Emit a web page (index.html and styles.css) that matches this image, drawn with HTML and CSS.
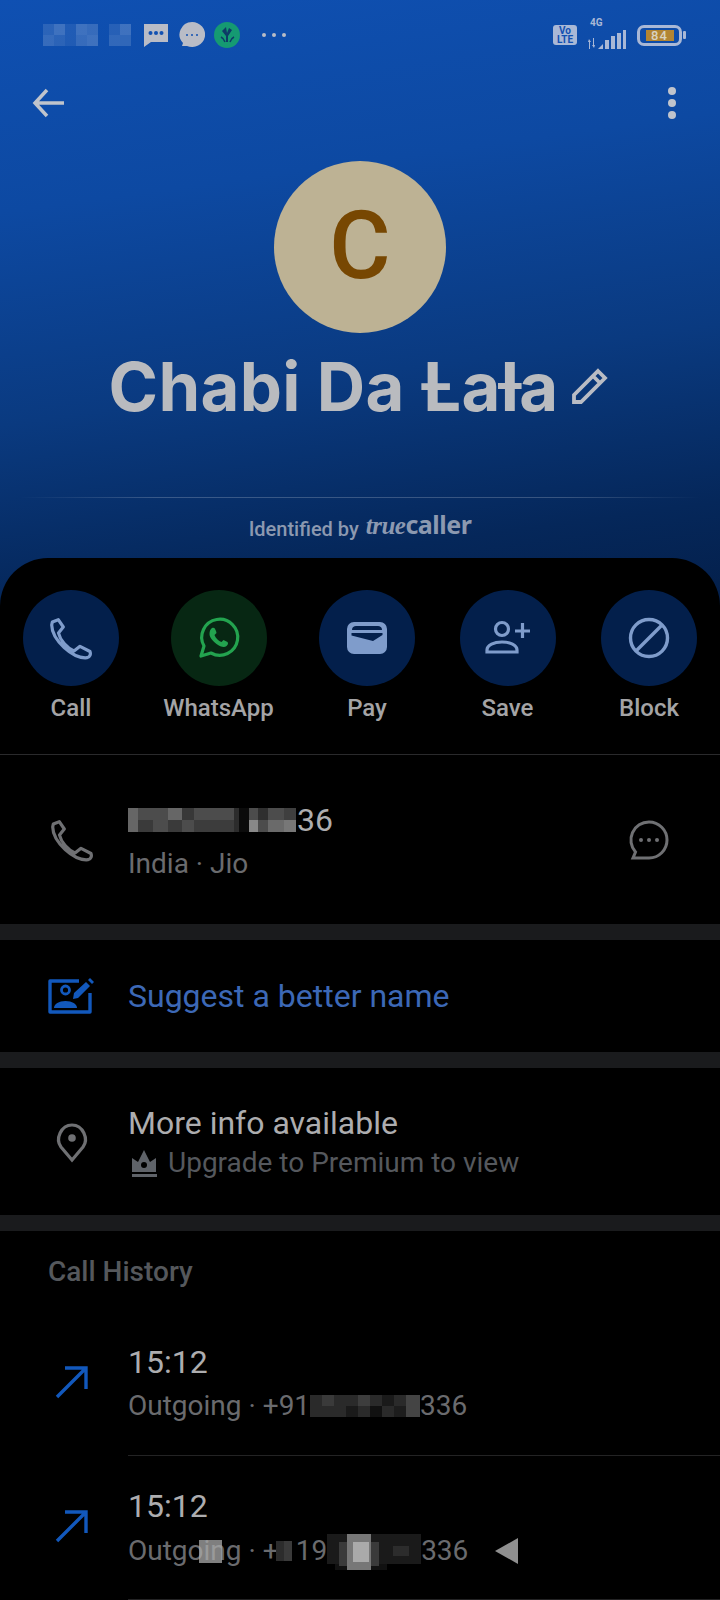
FILE: index.html
```html
<!DOCTYPE html>
<html lang="en">
<head>
<meta charset="utf-8">
<title>Chabi Da Lata</title>
<link rel="stylesheet" href="styles.css">
</head>
<body>
<div class="screen">
  <header class="hero">
    <div class="status">
      <div class="status-left">
        <svg class="mosaic-top" viewBox="0 0 90 22" width="90" height="22"><g fill="#fff">
          <rect width="11" height="11" opacity=".12"/><rect x="11" width="11" height="11" opacity=".2"/><rect x="22" width="11" height="11" opacity=".08"/><rect x="33" width="11" height="11" opacity=".2"/><rect x="44" width="11" height="11" opacity=".17"/>
          <rect y="11" width="11" height="11" opacity=".17"/><rect x="11" y="11" width="11" height="11" opacity=".12"/><rect x="22" y="11" width="11" height="11" opacity=".08"/><rect x="33" y="11" width="11" height="11" opacity=".17"/><rect x="44" y="11" width="11" height="11" opacity=".2"/>
          <rect x="66" width="11" height="11" opacity=".1"/><rect x="77" width="11" height="11" opacity=".2"/><rect x="66" y="11" width="11" height="11" opacity=".15"/><rect x="77" y="11" width="11" height="11" opacity=".14"/>
        </g></svg>
        <svg class="ic-msg" viewBox="0 0 24 24" width="24" height="24"><path fill="#b9bcc6" d="M0 1h24v18H7l-7 5z"/><g fill="#1150b2"><circle cx="6.500" cy="10" r="2"/><circle cx="12" cy="10" r="2"/><circle cx="17.500" cy="10" r="2"/></g></svg>
        <svg class="ic-bubble" viewBox="0 0 26 26" width="26" height="26"><path fill="#b9bcc6" d="M13 0a13 12.500 0 1 1-5 24H3l1-3A13 12.500 0 0 1 13 0z"/><g fill="#1150b2"><circle cx="8" cy="13" r="1"/><circle cx="13" cy="13" r="1"/><circle cx="18" cy="13" r="1"/></g></svg>
        <svg class="ic-saavn" viewBox="0 0 26 26" width="26" height="26"><circle cx="13" cy="13" r="13" fill="#159a72"/><path fill="#0d3a66" d="M12 5l1 6 2-5 3 2-4 6v6h-2v-6L8 9z"/><path stroke="#0d3a66" stroke-width="1.500" fill="none" d="M7 15c2 1 3 2 4 5M20 15c-2 1-3 2-4 5"/></svg>
        <svg class="ic-dots" viewBox="0 0 26 6" width="26" height="6"><g fill="#b9bcc6"><circle cx="3" cy="3" r="2"/><circle cx="13" cy="3" r="2"/><circle cx="23" cy="3" r="2"/></g></svg>
      </div>
      <div class="status-right">
        <div class="volte"><span>Vo</span><span>LTE</span></div>
        <div class="signal">
          <span class="net">4G</span>
          <svg viewBox="0 0 38 19" width="38" height="19"><g fill="#a9b8d6"><path d="M1 9l2 3H2v7H1v-7H0zM6 18l-2-3h1V8h1v7h1z"/><path d="M10 19l5-5v5z"/><rect x="17" y="10" width="4" height="9"/><rect x="23" y="6" width="4" height="13"/><rect x="29" y="3" width="4" height="16"/><rect x="35" y="0" width="3" height="19"/></g></svg>
        </div>
        <div class="battery"><span class="batt-fill">84</span></div>
        <span class="batt-cap"></span>
      </div>
    </div>
    <div class="toolbar">
      <svg class="back" viewBox="0 0 34 30" width="34" height="30"><path d="M32 15H3M15 2L3 15l12 13" fill="none" stroke="#c0c4cc" stroke-width="3.500"/></svg>
      <div class="kebab"><i></i><i></i><i></i></div>
    </div>
    <div class="avatar">C</div>
    <div class="name-row">
      <h1 class="name">Chabi Da Ƚaƚa</h1>
      <svg class="pencil" viewBox="0 0 38 38" width="38" height="38"><path d="M28 3l7 7L11 34H4v-7zM23 8l7 7" fill="none" stroke="#b9bcc4" stroke-width="3.800"/></svg>
    </div>
    <div class="hero-line"></div>
    <div class="identified"><span>Identified by</span><span class="logo"><em>true</em>caller</span></div>
  </header>

  <main class="sheet">
    <section class="actions">
      <div class="action"><div class="disc"><svg viewBox="0 0 44 44" width="44" height="44"><use href="#phone"/></svg></div><span>Call</span></div>
      <div class="action wide"><div class="disc green"><svg viewBox="0 0 44 44" width="44" height="44"><path d="M4 40l3-10a18 18 0 1 1 7 7z" fill="none" stroke="#23a34f" stroke-width="3.200" stroke-linejoin="round"/><path fill="#23a34f" d="M15 12c2-1 3 0 4 3l.5 2-2 2c1 3 4 6 7 7l2-2 4 2c1 1 .5 3-1 4-2 2-6 1-10-2s-7-7-7-10c0-3 1-5 2.500-6z"/></svg></div><span>WhatsApp</span></div>
      <div class="action pay"><div class="disc"><svg viewBox="0 0 44 44" width="44" height="44"><path fill="#7f9ccb" fill-rule="evenodd" d="M9 6h26a7 7 0 0 1 7 7v18a7 7 0 0 1-7 7H9a7 7 0 0 1-7-7V13a7 7 0 0 1 7-7zM7 14c0-3 2-4 4-4h22c2 0 4 1 4 4zM6.500 17H37.500v2L28 25 6.500 19.500z"/></svg></div><span>Pay</span></div>
      <div class="action"><div class="disc"><svg viewBox="0 0 48 44" width="48" height="44"><g fill="none" stroke="#7f9ccb" stroke-width="3.200"><circle cx="18" cy="13" r="6.500"/><path d="M3 36v-2c0-5 7-8 15-8s15 3 15 8v2zM31 15h15M38.500 7v15"/></g></svg></div><span>Save</span></div>
      <div class="action"><div class="disc"><svg viewBox="0 0 44 44" width="44" height="44"><g fill="none" stroke="#7f9ccb" stroke-width="3.400"><circle cx="22" cy="22" r="18.500"/><path d="M9 35L35 9"/></g></svg></div><span>Block</span></div>
    </section>

    <section class="row row-phone">
      <svg class="row-ic" viewBox="0 0 44 44" width="44" height="44"><use href="#phone"/></svg>
      <div class="row-text">
        <div class="title number"><svg viewBox="0 0 168 24" width="168" height="24" shape-rendering="crispEdges">
          <rect width="168" height="24" fill="#4c4c4c"/>
          <rect width="10" height="24" fill="#666"/><rect x="10" y="12" width="15" height="12" fill="#3a3a3a"/><rect x="40" width="14" height="12" fill="#666"/><rect x="40" y="12" width="14" height="12" fill="#3a3a3a"/><rect x="54" width="12" height="12" fill="#383838"/><rect x="66" y="12" width="40" height="12" fill="#3c3c3c"/><rect x="106" width="5" height="24" fill="#2c2c2c"/><rect x="111" width="10" height="24" fill="#0b0b0b"/><rect x="121" y="12" width="9" height="12" fill="#888"/><rect x="130" width="10" height="12" fill="#2f2f2f"/><rect x="140" y="12" width="16" height="12" fill="#6a6a6a"/><rect x="156" y="12" width="12" height="12" fill="#777"/><rect x="156" width="12" height="12" fill="#3f3f3f"/>
        </svg><span>36</span></div>
        <div class="sub">India · Jio</div>
      </div>
      <svg class="msg-ic" viewBox="0 0 42 42" width="42" height="42"><path d="M21 3a18 18 0 1 1 0 36H5l2.500-6A18 18 0 0 1 21 3z" fill="none" stroke="#6f7073" stroke-width="3"/><g fill="#6f7073"><circle cx="13" cy="21" r="2"/><circle cx="21" cy="21" r="2"/><circle cx="29" cy="21" r="2"/></g></svg>
    </section>
    <div class="band"></div>

    <section class="row row-suggest">
      <svg class="row-ic" viewBox="0 0 47 37" width="47" height="37"><path d="M42 15v19H2V3h29" fill="none" stroke="#1258bc" stroke-width="3.400" stroke-linejoin="round"/><g fill="#1258bc"><circle cx="17.500" cy="12" r="4" fill="none" stroke="#1258bc" stroke-width="2.800"/><path d="M6 30c0-4 5-7 11.500-7S29 26 29 30z"/><path d="M26 15L38 4l4 4-12 12-5 1zM40 2l2-2 4 4-2 2z"/></g></svg>
      <div class="suggest">Suggest a better name</div>
    </section>
    <div class="band"></div>

    <section class="row row-more">
      <svg class="row-ic" viewBox="0 0 44 44" width="44" height="44"><path d="M22 40L11 27c-6-8 0-22 11-22s17 14 11 22z" fill="none" stroke="#6f7073" stroke-width="3.200"/><circle cx="22" cy="18" r="3.800" fill="#6f7073"/></svg>
      <div class="row-text">
        <div class="title">More info available</div>
        <div class="sub premium"><svg viewBox="0 0 26 28" width="26" height="28"><path fill="#5f6369" d="M1 9l6 4 6-12 6 12 6-4v14H1z"/><rect x="1" y="25" width="25" height="3" fill="#5f6369"/><circle cx="13" cy="16" r="3" fill="#000"/></svg><span>Upgrade to Premium to view</span></div>
      </div>
    </section>
    <div class="band"></div>

    <h2 class="history">Call History</h2>

    <section class="call">
      <svg class="arrow" viewBox="0 0 34 34" width="34" height="34"><path d="M2 32L31 3M10 3h21v21" fill="none" stroke="#1258bc" stroke-width="3.400"/></svg>
      <div class="row-text call-text">
        <div class="title">15:12</div>
        <div class="sub outgoing"><span>Outgoing · +91</span><svg class="m1" viewBox="0 0 110 22" width="110" height="22" shape-rendering="crispEdges"><rect width="110" height="22" fill="#2a2a2a"/><rect x="12" width="12" height="11" fill="#3a3a3a"/><rect x="36" y="11" width="12" height="11" fill="#1a1a1a"/><rect x="48" width="12" height="11" fill="#3d3d3d"/><rect x="60" y="11" width="12" height="11" fill="#111"/><rect x="72" width="12" height="11" fill="#1a1a1a"/><rect x="84" y="11" width="12" height="11" fill="#1d1d1d"/><rect x="96" width="14" height="22" fill="#444"/></svg><span>336</span></div>
      </div>
    </section>
    <section class="call">
      <svg class="arrow" viewBox="0 0 34 34" width="34" height="34"><path d="M2 32L31 3M10 3h21v21" fill="none" stroke="#1258bc" stroke-width="3.400"/></svg>
      <div class="row-text call-text">
        <div class="title">15:12</div>
        <div class="sub outgoing second"><span>Outgoing · +</span><svg class="m2" viewBox="0 0 16 20" width="16" height="20" shape-rendering="crispEdges"><rect width="16" height="20" fill="#2c2c2c"/><rect x="8" width="8" height="20" fill="#3a3a3a"/></svg><span>19</span><svg class="m3" viewBox="0 0 94 36" width="94" height="36" shape-rendering="crispEdges"><rect width="94" height="30" fill="#1a1a1a"/><rect x="8" y="30" width="52" height="6" fill="#111"/><rect x="20" y="0" width="24" height="36" fill="#777"/><rect x="26" y="8" width="16" height="20" fill="#aaa"/><rect x="12" y="8" width="8" height="24" fill="#3a3a3a"/><rect x="44" y="8" width="8" height="24" fill="#3a3a3a"/><rect x="66" y="12" width="16" height="10" fill="#2c2c2c"/></svg><span>336</span></div>
      </div>
    </section>
  </main>

  <div class="home-btn"></div>
  <div class="back-btn"></div>
</div>

<svg class="defs" width="0" height="0" aria-hidden="true">
  <symbol id="phone" viewBox="0 0 44 44"><path fill="none" stroke="currentColor" stroke-width="3.200" stroke-linejoin="round" d="M3.300 6L9.300 3.700 14.300 11 9.500 17C11 24 18 32 25 35l6-4.700 10 5.200c1 2.500 0 5.500-3 6.200C24 43 3 24 2.700 9z"/></symbol>
</svg>
</body>
</html>
```

FILE: styles.css
```css
* { box-sizing: border-box; }
html, body { margin: 0; padding: 0; background: #000; }
body { font-family: Roboto, "Liberation Sans", sans-serif; }
.screen { position: relative; width: 720px; height: 1600px; overflow: hidden; background: #000; }
.defs { position: absolute; }

.hero { height: 608px; padding-top: 22px; background: linear-gradient(172deg, #0f50b2 0%, #0d49a2 30%, #0a3a80 60%, #05275a 85%, #041f4a 100%); display: flex; flex-direction: column; align-items: center; }
.status { width: 100%; height: 26px; padding: 0 43px; display: flex; justify-content: space-between; align-items: center; }
.status-left { display: flex; align-items: center; }
.ic-msg { margin-left: 11px; }
.ic-bubble { margin-left: 11px; }
.ic-saavn { margin-left: 9px; }
.ic-dots { margin-left: 21px; }
.status-right { display: flex; align-items: center; margin-right: -9px; }
.volte { width: 24px; height: 20px; border-radius: 3px; background: #a9b8d6; color: #1150b2; font: 700 10px/9px Roboto, sans-serif; display: flex; flex-direction: column; align-items: center; justify-content: center; }
.signal { position: relative; width: 38px; height: 28px; margin-left: 11px; display: flex; align-items: flex-end; }
.net { position: absolute; left: 2px; top: -4px; color: #a9b8d6; font: 700 10px/12px Roboto, sans-serif; }
.battery { width: 45px; height: 21px; margin-left: 11px; border: 3px solid #a9b8d6; border-radius: 7px; display: flex; align-items: center; justify-content: center; }
.batt-fill { width: 28px; height: 11px; background: #b28533; color: #d9d3c2; font: 500 13px/11px Roboto, sans-serif; letter-spacing: 1px; text-align: center; }
.batt-cap { width: 3px; height: 8px; margin-left: 1px; background: #a9b8d6; border-radius: 1px; }

.toolbar { width: 100%; padding: 0 44px 0 32px; margin-top: 40px; height: 30px; display: flex; justify-content: space-between; align-items: center; }
.kebab { display: flex; flex-direction: column; gap: 4px; }
.kebab i { display: block; width: 8px; height: 8px; border-radius: 50%; background: #c0c4cc; }

.avatar { width: 172px; height: 172px; margin-top: 43px; border-radius: 50%; background: #bdb294; color: #774702; font: 500 94px/170px Roboto, sans-serif; text-align: center; }
.name-row { display: flex; align-items: center; margin-top: 11px; margin-left: -3px; }
.name { margin: 0; color: #b9bbbf; font: 700 67px/86px Inter, "Noto Sans", sans-serif; letter-spacing: .3px; white-space: nowrap; }
.pencil { margin-left: 12px; }
.hero-line { width: 680px; height: 1px; margin-top: 67px; background: linear-gradient(90deg, rgba(255,255,255,0), rgba(255,255,255,.2) 20%, rgba(255,255,255,.2) 80%, rgba(255,255,255,0)); }
.identified { margin-top: 13px; display: flex; align-items: center; gap: 7px; color: #8c99b0; font: 500 20px/26px Roboto, sans-serif; }
.logo { margin-bottom: 8px; color: #8c99b0; font: 700 25px/26px "Noto Sans", sans-serif; letter-spacing: -.5px; }
.logo em { font-family: "Liberation Serif", serif; font-style: italic; }

.sheet { position: absolute; left: 0; top: 558px; width: 720px; height: 1042px; background: #000; border-radius: 48px 48px 0 0; }
.actions { height: 197px; padding: 32px 23px 0; display: flex; justify-content: space-between; border-bottom: 1px solid #2a2a2c; }
.action { width: 96px; display: flex; flex-direction: column; align-items: center; color: #a4a4a6; font: 500 24px/30px Roboto, sans-serif; white-space: nowrap; }
.action.wide { width: 108px; }
.action.pay { margin-left: 1px; margin-right: -1px; }
.disc { width: 96px; height: 96px; border-radius: 50%; background: #031f4b; color: #7f9ccb; margin-bottom: 7px; display: flex; align-items: center; justify-content: center; }
.disc.green { background: #072713; }

.row { display: flex; align-items: center; padding: 0 0 0 50px; }
.row-ic { width: 44px; flex: none; color: #6f7073; }
.row-text { margin-left: 34px; flex: 1; }
.row-phone { height: 169px; padding-right: 50px; }
.row-phone .row-text { padding-top: 3px; }
.row-phone .sub { margin-top: 6px; }
.msg-ic { flex: none; }
.band { height: 16px; background: #1a1b1d; }
.row-suggest { height: 112px; padding-left: 48px; }
.row-suggest .row-ic { width: 47px; }
.suggest { margin-left: 33px; color: #3c68b6; font: 400 32px/40px Roboto, sans-serif; }
.row-more { height: 147px; }
.title { color: #adadaf; font: 400 32px/40px Roboto, sans-serif; }
.sub { color: #6a6b6e; font: 400 28px/36px Roboto, sans-serif; margin-top: 5px; }
.number { display: flex; align-items: center; }
.number span { margin-left: 1px; }
.premium { display: flex; align-items: center; gap: 11px; margin-top: 2px; margin-left: 3px; color: #55585d; }
.history { margin: 0; padding: 23px 0 0 48px; height: 81px; color: #55585c; font: 500 28px/36px Roboto, sans-serif; }

.call { display: flex; align-items: center; height: 144px; padding-left: 55px; }
.arrow { flex: none; margin-top: -4px; }
.call-text { margin-left: 39px; height: 144px; padding-top: 30px; border-bottom: 1px solid #232324; }
.call-text .sub { margin-top: 6px; }
.outgoing { display: flex; align-items: center; }
.outgoing svg { flex: none; }
.outgoing .m2 { margin-left: -3px; margin-right: 4px; }
.outgoing .m3 { margin-top: 2px; }

.home-btn { position: absolute; left: 199px; top: 1540px; width: 23px; height: 23px; background: rgba(170,170,170,.75); }
.back-btn { position: absolute; left: 495px; top: 1538px; width: 0; height: 0; border-style: solid; border-width: 13.500px 23px 13.500px 0; border-color: transparent #8f8f8f transparent transparent; }
```
